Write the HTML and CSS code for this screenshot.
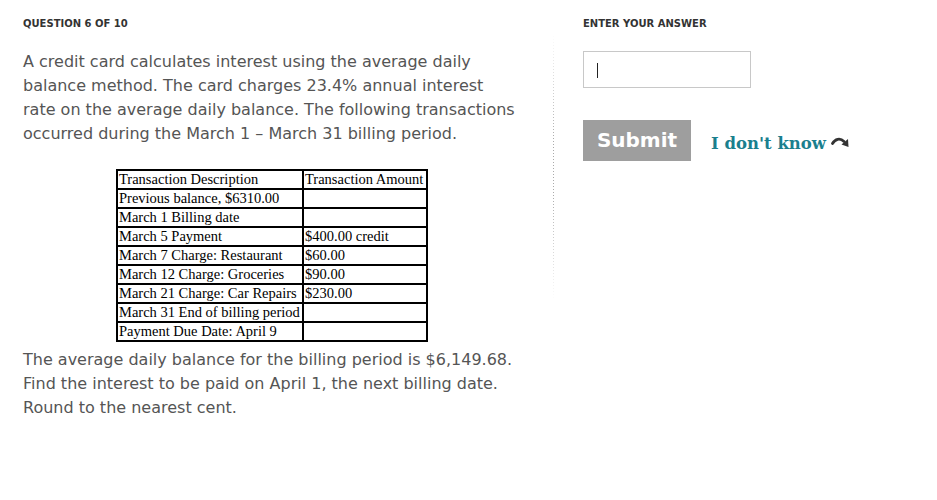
FILE: index.html
```html
<!DOCTYPE html>
<html>
<head>
<meta charset="utf-8">
<link rel="stylesheet" href="styles.css">
</head>
<body>
<div class="page">
  <section class="question">
    <h2 class="label">QUESTION 6 OF 10</h2>
    <p class="text">A credit card calculates interest using the average daily balance method. The card charges 23.4% annual interest rate on the average daily balance. The following transactions occurred during the March 1 – March 31 billing period.</p>
    <table class="tx">
      <tr><td class="c1">Transaction Description</td><td class="c2">Transaction Amount</td></tr>
      <tr><td>Previous balance, $6310.00</td><td></td></tr>
      <tr><td>March 1 Billing date</td><td></td></tr>
      <tr><td>March 5 Payment</td><td>$400.00 credit</td></tr>
      <tr><td>March 7 Charge: Restaurant</td><td>$60.00</td></tr>
      <tr><td>March 12 Charge: Groceries</td><td>$90.00</td></tr>
      <tr><td>March 21 Charge: Car Repairs</td><td>$230.00</td></tr>
      <tr><td>March 31 End of billing period</td><td></td></tr>
      <tr><td>Payment Due Date: April 9</td><td></td></tr>
    </table>
    <p class="text after">The average daily balance for the billing period is $6,149.68. Find the interest to be paid on April 1, the next billing date. Round to the nearest cent.</p>
  </section>
  <div class="divider"></div>
  <section class="answer">
    <h2 class="label">ENTER YOUR ANSWER</h2>
    <div class="input"><span class="caret"></span></div>
    <div class="actions">
      <button class="submit">Submit</button>
      <a class="skip">I don't know <svg class="arrow" width="19" height="13" viewBox="0 0 19 13"><path d="M1.5 7.5 C4 3, 9 1.5, 13 5.5" fill="none" stroke="#333" stroke-width="2.8" stroke-linecap="round"/><path d="M10.5 8.5 L17.5 11 L17 3 Z" fill="#333"/></svg></a>
    </div>
  </section>
</div>
</body>
</html>
```
FILE: styles.css
```css
* { box-sizing: border-box; }
body {
  margin: 0;
  background: #fff;
  font-family: "DejaVu Sans", Verdana, sans-serif;
  color: #555;
}
.page {
  display: flex;
  padding: 18px 0 0 23px;
}
.question {
  width: 495px;
}
.label {
  margin: 0;
  font-family: "DejaVu Sans", Verdana, sans-serif;
  font-size: 10px;
  font-weight: 700;
  color: #333;
  line-height: 12px;
}
.text {
  margin: 20px 0 0;
  font-size: 16px;
  line-height: 24px;
  color: #555;
}
.tx {
  margin: 23px 0 0 93px;
  border-collapse: collapse;
  font-family: "Liberation Serif", "Times New Roman", serif;
  font-size: 14.5px;
  color: #000;
  border: 2px solid #000;
}
.tx td {
  border: 2px solid #000;
  padding: 0 1px;
  height: 19px;
  line-height: 15px;
  white-space: nowrap;
}
.tx td.c1 { width: 186px; }
.tx td.c2 { width: 124px; }
.text.after {
  margin-top: 6px;
}
.divider {
  width: 1px;
  margin: 15px 0 0 35px;
  height: 268px;
  background-image: repeating-linear-gradient(to bottom, #aaa 0 1px, transparent 1px 3px);
  -webkit-mask-image: linear-gradient(to bottom, transparent, #000 40%, #000 60%, transparent);
  mask-image: linear-gradient(to bottom, transparent, #000 40%, #000 60%, transparent);
}
.answer {
  margin-left: 29px;
}
.input {
  margin-top: 21px;
  width: 168px;
  height: 37px;
  border: 1px solid #c8c8c8;
  padding: 11px 13px;
}
.caret {
  display: block;
  width: 1px;
  height: 15px;
  background: #222;
}
.actions {
  margin-top: 32px;
  display: flex;
  align-items: center;
}
.submit {
  width: 108px;
  height: 41px;
  border: none;
  background: #9e9e9e;
  color: #fff;
  font-family: "DejaVu Sans", Verdana, sans-serif;
  font-weight: 700;
  font-size: 20px;
  padding: 0 0 2px;
}
.skip {
  margin-left: 20px;
  font-family: "DejaVu Serif", Georgia, serif;
  font-weight: 700;
  font-size: 16.5px;
  color: #1a7f8e;
  display: flex;
  align-items: center;
  gap: 5px;
  margin-top: 6px;
}
.arrow { display: block; margin-top: -2px; }
```
